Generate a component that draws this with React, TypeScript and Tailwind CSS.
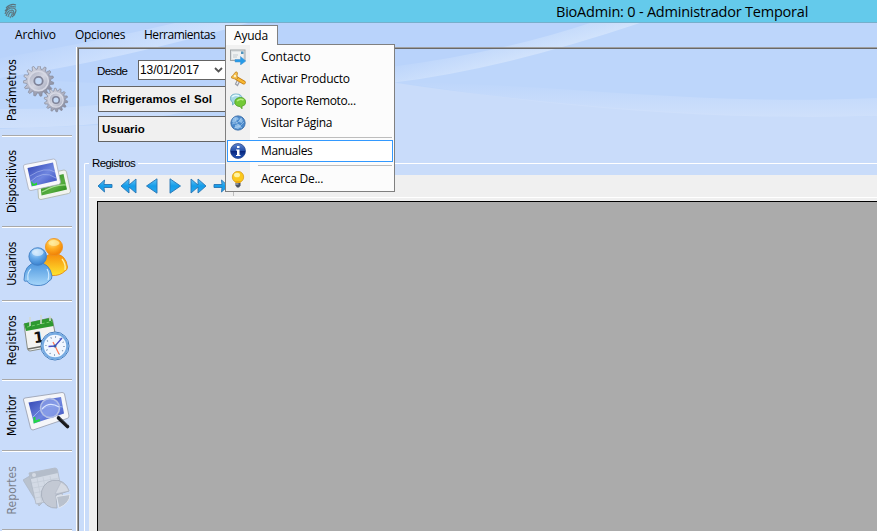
import React from "react";

const UI = "font-['Open_Sans','Noto_Sans',sans-serif]";

function Backdrop() {
  return (
    <svg className="absolute left-0 top-[23px]" width="877" height="508" viewBox="0 23 877 508">
      <defs>
        <linearGradient id="sweep" gradientUnits="userSpaceOnUse" x1="500" y1="30" x2="510" y2="65">
          <stop offset="0" stopColor="#d3e4fc" stopOpacity="0" />
          <stop offset="1" stopColor="#d3e4fc" />
        </linearGradient>
        <linearGradient id="low" x1="0" y1="0" x2="0" y2="1">
          <stop offset="0" stopColor="#cfe0fc" stopOpacity="0" />
          <stop offset="1" stopColor="#cfe0fb" />
        </linearGradient>
        <linearGradient id="leftSweep" gradientUnits="userSpaceOnUse" x1="100" y1="22" x2="112" y2="60">
          <stop offset="0" stopColor="#d8e7fe" stopOpacity="0" />
          <stop offset="1" stopColor="#d8e7fe" />
        </linearGradient>
      </defs>
      <rect y="23" width="877" height="508" fill="#c9dcfa" />
      <path d="M0 23H877V116C740 119 580 110 390 82L225 120L0 129Z" fill="#bdd6fb" />
      <path d="M0 23H640Q500 70 390 82L225 90L0 78Z" fill="#b9d3fb" />
      <path d="M400 82C560 84 700 106 877 98V116C730 120 570 111 400 82Z" fill="url(#low)" />
      <path d="M390 67Q500 53 590 23H640Q500 70 390 83Z" fill="url(#sweep)" />
      <path d="M0 58Q90 43 175 23H248Q120 60 0 78Z" fill="url(#leftSweep)" opacity=".65" />
      <path d="M0 109Q120 111 225 80V104Q120 128 0 128Z" fill="url(#low)" />
    </svg>
  );
}

function gearPath(cx: number, cy: number, ro: number, ri: number, n: number) {
  const pts: string[] = [];
  for (let i = 0; i < n; i++) {
    const steps: [number, number][] = [[0, ri], [0.22, ro], [0.5, ro], [0.72, ri]];
    for (const [f, r] of steps) {
      const a = ((i + f) / n) * Math.PI * 2;
      pts.push(`${(cx + r * Math.cos(a)).toFixed(2)},${(cy + r * Math.sin(a)).toFixed(2)}`);
    }
  }
  return `M${pts.join("L")}Z`;
}

function Gears() {
  return (
    <svg width="48" height="48" viewBox="0 0 48 48">
      <defs>
        <linearGradient id="metal" x1="0" y1="0" x2="1" y2="1">
          <stop offset="0" stopColor="#e4e5ee" />
          <stop offset=".5" stopColor="#b0b3c4" />
          <stop offset="1" stopColor="#777b90" />
        </linearGradient>
        <linearGradient id="disc" x1="0" y1="0" x2="1" y2="1">
          <stop offset="0" stopColor="#a9adbf" />
          <stop offset=".5" stopColor="#d3d5e1" />
          <stop offset="1" stopColor="#a3a7ba" />
        </linearGradient>
      </defs>
      <path d={gearPath(15.5, 15, 15.3, 12, 15)} fill="url(#metal)" stroke="#85899a" strokeWidth=".7" />
      <circle cx="15.5" cy="15" r="9.8" fill="url(#disc)" stroke="#d6d8e4" strokeWidth="1.6" />
      <circle cx="15.5" cy="15" r="4.2" fill="#c4d9f6" stroke="#7f8398" strokeWidth="1.8" />
      <path d={gearPath(33, 34, 11.8, 9.2, 14)} fill="url(#metal)" stroke="#85899a" strokeWidth=".7" />
      <circle cx="33" cy="34" r="7.2" fill="url(#disc)" stroke="#d9dbe6" strokeWidth="1.3" />
      <circle cx="33" cy="34" r="3.3" fill="#c4d9f6" stroke="#7f8398" strokeWidth="1.5" />
    </svg>
  );
}

function Devices() {
  return (
    <svg width="48" height="48" viewBox="0 0 48 48">
      <defs>
        <linearGradient id="blueScr" x1="0" y1="0" x2="1" y2="1">
          <stop offset="0" stopColor="#2d41b0" />
          <stop offset=".55" stopColor="#6f86e0" />
          <stop offset="1" stopColor="#3146ba" />
        </linearGradient>
        <linearGradient id="greenScr" x1="0" y1="0" x2="1" y2="1">
          <stop offset="0" stopColor="#217d16" />
          <stop offset=".6" stopColor="#56ad3f" />
          <stop offset="1" stopColor="#1b7f0d" />
        </linearGradient>
      </defs>
      <path d="M14 20L41 14Q43 14 43.5 16L47.5 35Q47.5 37 45.5 37.500L18 43.5Q16 43.500 15.500 42Z" fill="#f1f4ef" stroke="#a9b2a5" strokeWidth=".8" />
      <path d="M17 24L40.500 18L44 33.500L18.500 39.500Z" fill="url(#greenScr)" />
      <path d="M19 36Q33 28 43 29" stroke="#a5df90" strokeWidth="1.200" fill="none" />
      <path d="M.5 11Q0 9 2 8.500L30.500 3Q32.500 3 33 5L37.5 26Q37.500 28 35.500 28.500L8 34.500Q6 34.500 5.500 33Z" fill="#f7f8fb" stroke="#a9aebd" strokeWidth=".8" />
      <path d="M4.500 12L30 6.500L34 24.500L8.500 30.500Z" fill="url(#blueScr)" />
      <path d="M7 26Q20 13 33 22M7 20Q22 10 32 16" stroke="#aebdf2" fill="none" opacity=".6" />
      <path d="M8 25L11 28L14 26.500L14 29L9 30Z" fill="#25d52f" />
    </svg>
  );
}

function Users() {
  return (
    <svg width="48" height="48" viewBox="0 0 48 48">
      <defs>
        <radialGradient id="orange" cx=".4" cy=".25" r=".8">
          <stop offset="0" stopColor="#ffe58a" />
          <stop offset=".45" stopColor="#ffae22" />
          <stop offset="1" stopColor="#ee7900" />
        </radialGradient>
        <linearGradient id="orangeBody" x1="0" y1="0" x2="0" y2="1">
          <stop offset="0" stopColor="#f68b0a" />
          <stop offset="1" stopColor="#ffe52f" />
        </linearGradient>
        <radialGradient id="sky" cx=".4" cy=".25" r=".8">
          <stop offset="0" stopColor="#c4e3fb" />
          <stop offset=".45" stopColor="#69adeb" />
          <stop offset="1" stopColor="#347ccb" />
        </radialGradient>
        <linearGradient id="skyBody" x1="0" y1="0" x2="0" y2="1">
          <stop offset="0" stopColor="#4a94dd" />
          <stop offset="1" stopColor="#a5d6fa" />
        </linearGradient>
      </defs>
      <path d="M19 32Q19 16 30.500 15.500Q43 16 44.500 29Q44.500 32 42 33Q37 38 29 37.500Q21 37 19 32Z" fill="url(#orangeBody)" stroke="#e58a13" strokeWidth=".9" />
      <path d="M39 21Q43 26 42 32" stroke="#fff1a3" strokeWidth="1.300" fill="none" />
      <circle cx="31" cy="9" r="8.600" fill="url(#orange)" stroke="#ec9322" strokeWidth=".8" />
      <ellipse cx="31" cy="5" rx="5.500" ry="3" fill="#fff2ae" opacity=".65" />
      <path d="M1 42Q1 26 14 24Q27 25 29 38Q29 42 26 43Q22 48 14 47.500Q6 47 4 43Q1 44 1 42Z" fill="url(#skyBody)" stroke="#427fc4" strokeWidth=".9" />
      <path d="M5 42Q4 34 8 31M24 31Q27 36 25 42" stroke="#d3ecff" strokeWidth="1.100" fill="none" />
      <circle cx="14.700" cy="18.500" r="8.800" fill="url(#sky)" stroke="#427fc4" strokeWidth=".9" />
      <ellipse cx="14.700" cy="14.500" rx="5.800" ry="3.400" fill="#e4f3ff" opacity=".65" />
    </svg>
  );
}

function CalendarClock() {
  return (
    <svg width="48" height="48" viewBox="0 0 48 48">
      <path d="M1 9L27 3Q29 3 29.500 5L34 28Q34 31 31 31.500L7 36Q5 36 4.500 34Z" fill="#f3f3f1" stroke="#80847c" strokeWidth=".9" />
      <path d="M1 8.500L27 3Q29 3 30 8L30.500 11L3 16Z" fill="#2e9930" />
      <path d="M4 12L29 6.500" stroke="#6dca65" strokeWidth="1" strokeDasharray="3 2" />
      <path d="M7 11V2M18 9V0M27 6V1" stroke="#d1dad3" strokeWidth="1.600" />
      <path d="M5 34L32 29" stroke="#6c6d67" strokeWidth="1.600" />
      <text x="10.500" y="27.500" transform="rotate(-8 16 22)" fontFamily="DejaVu Sans, sans-serif" fontWeight="bold" fontSize="15" fill="#111">1</text>
      <circle cx="32" cy="31" r="14" fill="#e8f1fd" stroke="#3b76b9" strokeWidth="1" />
      <circle cx="32" cy="31" r="12.300" fill="#f1f7ff" stroke="#76abe2" strokeWidth="2.200" />
      <circle cx="32" cy="31" r="9" fill="none" stroke="#527195" strokeWidth="1.400" strokeDasharray=".8 3.912" />
      <path d="M25.500 31.500L32 31L39 23" fill="none" stroke="#4b4ec1" strokeWidth="1.300" />
      <path d="M30 27L36 39" stroke="#ff7a57" strokeWidth="1.300" />
      <circle cx="32" cy="31" r="1.500" fill="#315cac" />
    </svg>
  );
}

function Monitor() {
  return (
    <svg width="48" height="48" viewBox="0 0 48 48">
      <path d="M.5 12Q0 10.500 2 10L39 4.500Q41 4.500 41.500 6L46 28Q46 30 44 30.500L10 42Q8 42 7.500 40Z" fill="#f5f6f9" stroke="#9da4b4" strokeWidth=".9" />
      <path d="M5.500 14.500L38 9L41 25.500L11 35.500Z" fill="url(#blueScr)" />
      <path d="M10 29Q22 14 40 19" stroke="#97b4ef" strokeWidth="1" fill="none" />
      <path d="M11.500 29V34L17 32" stroke="#21d943" strokeWidth="2" fill="none" />
      <path d="M34 27L37 30" stroke="#a7adc1" strokeWidth="2" />
      <circle cx="27" cy="20" r="9.500" fill="#8fa3ea" fillOpacity=".72" stroke="#b4c0e6" strokeWidth="1.500" />
      <path d="M19 21Q26 13 36 19" stroke="#dbe6ff" strokeWidth="1.200" fill="none" />
      <path d="M35.500 30L44.500 38.500" stroke="#17191d" strokeWidth="3.600" strokeLinecap="round" />
      <path d="M37 29.500L45 37" stroke="#777d87" strokeWidth=".8" />
    </svg>
  );
}

function Reports() {
  return (
    <svg width="48" height="48" viewBox="0 0 48 48">
      <path d="M0 15L10 9L21 36L16 41Z" fill="#b9c2ce" stroke="#abb4c3" strokeWidth=".7" />
      <path d="M6 8L32 3Q34 3 34.500 5L40 33L13 39Z" fill="#d3dae5" stroke="#aeb7c5" strokeWidth=".8" />
      <path d="M6 8L32 3Q34 3 35 8L8 14Z" fill="#b4bdca" />
      <circle cx="11" cy="10" r="2" fill="#d5dbe4" />
      <path d="M9 18L36 13M10 23L37 18M11 28L38 23M12 33L39 28M14 13L19 38M20 12L25 37M27 11L32 36" stroke="#c3cbd7" strokeWidth=".7" />
      <path d="M33 30L34 43A14 14 0 1 1 46 26Z" fill="#c3c9d4" stroke="#a7afbc" strokeWidth=".9" />
      <path d="M32 29L38 17Q44 20 46 26Z" fill="#d5dae3" stroke="#aab2c0" strokeWidth=".5" />
      <path d="M33.500 31.500L47 29.500Q47 38 36 43Z" fill="#b9c1cd" stroke="#e4e9f1" strokeWidth=".9" />
    </svg>
  );
}

type SideProps = { label: string; h: string; len: string; dim?: boolean; shift?: string; children: React.ReactNode };

function SideItem({ label, h, len, dim, shift, children }: SideProps) {
  return (
    <div className={`ml-[2px] flex w-[70px] shrink-0 items-center border-b border-white ${h}`}>
      <div className="flex h-full w-full items-center border-b border-[#a9a9a9]">
        <div className="flex w-[20px] shrink-0 justify-center">
          <span
            className={`rotate-180 whitespace-nowrap leading-[14px] [writing-mode:vertical-rl] font-['DejaVu_Sans',sans-serif] font-stretch-condensed text-[12px] ${len} ${dim ? "text-[#7c828d]" : "text-black"}`}
          >
            {label}
          </span>
        </div>
        <div className={`ml-[1px] shrink-0 ${shift ?? ""}`}>{children}</div>
      </div>
    </div>
  );
}

function Sidebar() {
  return (
    <div className="flex w-[76px] shrink-0 flex-col overflow-hidden">
      <SideItem label="Parámetros" h="h-[90px]" len="tracking-[0.05px] mb-[3px]" shift="-mt-[2px]"><Gears /></SideItem>
      <SideItem label="Dispositivos" h="h-[91px]" len="tracking-[-0.15px]" shift="-mt-1"><Devices /></SideItem>
      <SideItem label="Usuarios" h="h-[74px]" len="tracking-[-0.35px]" shift="-mt-1"><Users /></SideItem>
      <SideItem label="Registros" h="h-[79px]" len="tracking-[0.05px]" shift="-mt-[3px]"><CalendarClock /></SideItem>
      <SideItem label="Monitor" h="h-[71px]" len="tracking-[0px]" shift="-mt-[7px]"><Monitor /></SideItem>
      <SideItem label="Reportes" h="h-[79px]" len="tracking-[0.05px]" shift="-mt-[4px]" dim><Reports /></SideItem>
    </div>
  );
}

function Nav({ d }: { d: string }) {
  return (
    <svg width="18" height="16" viewBox="0 0 18 16">
      <defs>
        <linearGradient id="nav" x1="0" y1="0" x2="0" y2="1">
          <stop offset="0" stopColor="#63c5f6" />
          <stop offset=".5" stopColor="#159ce9" />
          <stop offset="1" stopColor="#2aaaf0" />
        </linearGradient>
      </defs>
      <path d={d} fill="url(#nav)" stroke="#2674b4" strokeWidth=".9" strokeLinejoin="round" />
    </svg>
  );
}

const NAVS = [
  "M1 8L7.500 2L7 6.500H15V9.500H7L7.500 14Z",
  "M1 8L9 1V7L16 1V15L9 9V15Z",
  "M3.500 8L14 .800V15.200Z",
  "M14.500 8L4 .800V15.200Z",
  "M17 8L9 1V7L2 1V15L9 9V15Z",
  "M16 8L9.500 2L10 6.500H2V9.500H10L9.500 14Z",
];

function IconContact() {
  return (
    <svg width="16" height="16" viewBox="0 0 16 16">
      <rect x=".5" y="1" width="14.500" height="10.500" fill="#dde1e3" stroke="#a0a5a8" />
      <path d="M2 3H13V10H2Z" fill="#eff1f1" />
      <rect x="11" y="2.500" width="2.500" height="2.500" fill="#4d93bd" />
      <path d="M3 6H8M3 8H7" stroke="#c3cbd0" />
      <path d="M5 10.500H10.500V7.500L15.800 12L10.500 16V13H5Z" fill="#269be8" stroke="#4d91cb" strokeWidth=".5" />
    </svg>
  );
}

function IconKey() {
  return (
    <svg width="16" height="16" viewBox="0 0 16 16">
      <path d="M8 8L5.500 13L7.500 14.500L10 9.500" fill="none" stroke="#999da6" strokeWidth="1.200" />
      <path d="M7 7.500L13.800 11.500" stroke="#c17a12" strokeWidth="3.800" strokeLinecap="round" />
      <path d="M7 7.500L13.800 11.500" stroke="#f8b831" strokeWidth="2.500" strokeLinecap="round" />
      <path d="M1.500 7Q1 5 3 4.500L5 1.500Q7 0 7.500 2L7 5L8 7Q7 9 5 8Z" fill="#f7c14a" stroke="#bf8429" strokeWidth=".8" />
      <circle cx="5" cy="5" r="1.200" fill="#fff1c6" />
    </svg>
  );
}

function IconChat() {
  return (
    <svg width="16" height="16" viewBox="0 0 16 16">
      <path d="M6 1C2 1 .4 3 .4 5.500Q.4 8 2.500 9V12L5.500 9.500C9.500 9.500 12 8 12 5.500Q12 1 6 1Z" fill="#a4d7e5" stroke="#65a9c0" strokeWidth=".8" />
      <path d="M2 4Q5 1 9 3" stroke="#e1f8fc" strokeWidth="1.500" fill="none" />
      <path d="M10.500 4.500C7 4.500 4.800 6.500 4.800 9C4.800 12 7 13.500 10 13.500L12 15.800V13C15 12.500 15.600 11 15.600 9C15.600 6 13.500 4.500 10.500 4.500Z" fill="#72c936" stroke="#4f9c25" strokeWidth=".8" />
      <path d="M7 8Q10 5 13.500 7" stroke="#b7ed83" strokeWidth="1.500" fill="none" />
    </svg>
  );
}

function IconGlobe() {
  return (
    <svg width="16" height="16" viewBox="0 0 16 16">
      <circle cx="8" cy="8" r="7.100" fill="#4a89cb" stroke="#3d70ac" />
      <path d="M3 3L7 2L9 4L6 6L4 8L2 7ZM10 3L13 5L12 8L9 7ZM5 10L9 9L11 12L8 14L5 13Z" fill="#8dbce8" />
      <path d="M2 9Q8 9 12 3M4 13Q11 12 14 7M5 2Q5 9 12 13" stroke="#b3d3f0" strokeWidth=".6" fill="none" />
    </svg>
  );
}

function IconInfo() {
  return (
    <svg width="16" height="16" viewBox="0 0 16 16">
      <defs>
        <linearGradient id="info" x1="0" y1="0" x2="0" y2="1">
          <stop offset="0" stopColor="#6086cf" />
          <stop offset=".48" stopColor="#244fa9" />
          <stop offset=".52" stopColor="#08257c" />
          <stop offset="1" stopColor="#2457bb" />
        </linearGradient>
      </defs>
      <circle cx="8" cy="8" r="7.500" fill="url(#info)" stroke="#1d3e84" strokeWidth=".7" />
      <path d="M7 3H9.500V5H7ZM6 6.500H9.500V12H10.500V13H6V12H7V7.500H6Z" fill="white" />
    </svg>
  );
}

function IconBulb() {
  return (
    <svg width="16" height="17" viewBox="0 0 16 17">
      <circle cx="8" cy="6" r="5.700" fill="#fbc81b" stroke="#d69612" strokeWidth=".7" />
      <path d="M5 10H11L10 13H6Z" fill="#eaaa13" />
      <ellipse cx="7" cy="4" rx="3" ry="2.300" fill="#fff3a0" />
      <path d="M5.500 12H10.500V14.500L9 16.500H7L5.500 14.500Z" fill="#4c5362" />
      <path d="M6 13H8.500" stroke="#c2cad4" />
    </svg>
  );
}

type EntryProps = { icon: React.ReactNode; label: string; active?: boolean; fit: string };

function Entry({ icon, label, active, fit }: EntryProps) {
  return (
    <div className={`ml-px flex h-[22px] items-center border ${active ? "border-[#3399ff] bg-white" : "border-transparent"}`}>
      <div className="ml-[2px] flex w-[16px] shrink-0 justify-center">{icon}</div>
      <span className={`ml-[15px] whitespace-nowrap text-[12px] leading-[18px] ${fit}`}>{label}</span>
    </div>
  );
}

function Separator() {
  return <div className="flex h-[6px] items-center pl-[32px] pr-px"><div className="h-px w-full bg-[#bdbdbd]" /></div>;
}

function HelpMenu() {
  return (
    <div className={`absolute left-[225px] top-[25px] z-10 w-[170px] text-black ${UI}`}>
      <div className="relative z-10 flex h-[20px] w-[53px] items-center border border-b-0 border-[#808080] bg-[#fcfcfc] pl-[8px] text-[12px] tracking-[-0.2px]">Ayuda</div>
      <div className="-mt-px h-[148px] border border-[#808080] bg-[linear-gradient(to_right,#f1f1f1_24px,#fcfcfc_24px)] pr-px pt-px">
        <Entry icon={<IconContact />} label="Contacto" fit="tracking-[-0.1px]" />
        <Entry icon={<IconKey />} label="Activar Producto" fit="tracking-[-0.24px]" />
        <Entry icon={<IconChat />} label="Soporte Remoto..." fit="tracking-[-0.36px]" />
        <Entry icon={<IconGlobe />} label="Visitar Página" fit="tracking-[-0.3px]" />
        <Separator />
        <Entry icon={<IconInfo />} label="Manuales" fit="tracking-[-0.36px]" active />
        <Separator />
        <Entry icon={<IconBulb />} label="Acerca De..." fit="tracking-[-0.28px]" />
      </div>
    </div>
  );
}

function Fingerprint() {
  return (
    <svg width="14" height="16" viewBox="0 0 14 16" fill="none" stroke="#59737d" strokeWidth="1.100">
      <path d="M2 5Q7 0 12 2M1 8Q5 2 12 4M1 11Q3 5 8 5Q12 5 12 8M2 13Q4 7 8 7Q11 8 9 12M4 14Q5 9 8 9Q9 11 6 15M8 14Q11 12 12 8" />
      <path d="M3 4L11 13M7 2L12 8M1 8L7 15" stroke="#75909a" strokeWidth=".6" />
    </svg>
  );
}

function FieldBox({ children }: { children: React.ReactNode }) {
  return (
    <div className="flex h-[26px] w-[220px] items-center border border-[#646464] bg-[#f0f0f0] pl-[3px] pt-[2px] font-['Liberation_Sans',sans-serif] text-[11.500px] font-bold tracking-[0px] text-black [word-spacing:1px]">
      {children}
    </div>
  );
}

export default function App() {
  return (
    <div className={`relative flex h-[531px] w-[877px] flex-col overflow-hidden text-black ${UI}`}>
      <Backdrop />
      <header className="relative flex h-[23px] shrink-0 items-center border-b border-[#76afcb] bg-[#64caeb]">
        <div className="ml-[4px]"><Fingerprint /></div>
        <h1 className="ml-[538px] whitespace-nowrap pt-px text-[14.500px] leading-[22px] tracking-[-0.21px]">BioAdmin: 0 - Administrador Temporal</h1>
      </header>
      <nav className="relative flex h-[24px] shrink-0 items-center text-[12px]">
        <span className="ml-[15px] w-[60px] tracking-[-0.15px]">Archivo</span>
        <span className="w-[69px] tracking-[-0.3px]">Opciones</span>
        <span className="tracking-[-0.48px]">Herramientas</span>
      </nav>
      <div className="relative flex min-h-0 grow">
        <Sidebar />
        <main className="flex min-w-0 grow flex-col border-l border-white">
          <div className="flex min-h-0 grow flex-col border-l border-t border-[#a0a0a0]">
            <div className="flex min-h-0 grow flex-col border-l border-t border-[#696969]">
              <div className="flex h-[31px] shrink-0 items-end pl-[18px] font-['Liberation_Sans',sans-serif] text-[11.500px]">
                <span className="w-[41px] tracking-[-0.6px]">Desde</span>
                <div className="flex h-[20px] w-[110px] items-center border border-[#646464] bg-white pl-[1px]">
                  <span className="w-[74px] text-[12px] tracking-[-0.1px]">13/01/2017</span>
                  <svg width="9" height="8" viewBox="0 0 9 8"><path d="M1 2L4.500 5.500L8 2" fill="none" stroke="#555" strokeWidth="1.800" /></svg>
                </div>
              </div>
              <div className="mt-[6px] flex shrink-0 flex-col gap-[4px] pl-[19px]">
                <FieldBox>Refrigeramos el Sol</FieldBox>
                <FieldBox>Usuario</FieldBox>
              </div>
              <div className="mt-[13px] flex h-[16px] shrink-0 items-center pl-[5px]">
                <div className="mt-[8px] h-[8px] w-[5px] rounded-tl-[2px] border-l border-t border-white" />
                <span className="ml-[3px] mr-[3px] pt-px font-['Liberation_Sans',sans-serif] text-[11.500px] tracking-[-0.6px]">Registros</span>
                <div className="mt-px h-px grow bg-white" />
              </div>
              <div className="ml-[5px] flex min-h-0 grow flex-col border-l border-white pl-[4px] pt-[4px]">
                <div className="flex h-[22px] shrink-0 items-center gap-[5px] border-b border-[#f0f0f0] bg-[#f0f0f0] pl-[8px]">
                  {NAVS.map((d) => <Nav key={d} d={d} />)}
                  <div className="-ml-[2px] h-[20px] w-px bg-[#bdbdbd]" />
                </div>
                <div className="h-px shrink-0 bg-white" />
                <div className="flex min-h-0 grow bg-[#f0f0f0] pl-[8px] pt-[3px]">
                  <div className="grow border-l border-t border-black bg-[#ababab]" />
                </div>
              </div>
            </div>
          </div>
        </main>
      </div>
      <HelpMenu />
    </div>
  );
}
